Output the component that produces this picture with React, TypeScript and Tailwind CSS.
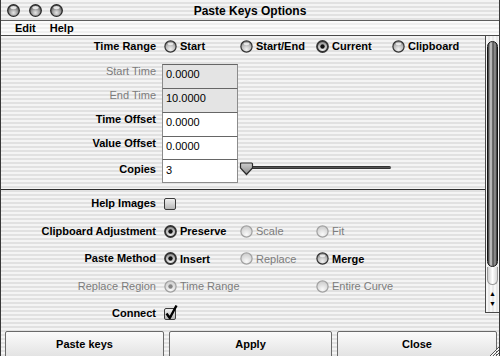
import React from "react";

function Light() {
  return (
    <svg width="13" height="13" viewBox="0 0 13 13">
      <defs>
        <radialGradient id="lg" cx="50%" cy="70%" r="60%">
          <stop offset="0%" stopColor="#e8e8e8" />
          <stop offset="60%" stopColor="#9a9a9a" />
          <stop offset="100%" stopColor="#5a5a5a" />
        </radialGradient>
      </defs>
      <circle cx="6.5" cy="6.5" r="5.8" fill="url(#lg)" stroke="#2a2a2a" strokeWidth="1.3" />
      <ellipse cx="6.5" cy="3.6" rx="3.2" ry="1.6" fill="#f4f4f4" opacity="0.85" />
    </svg>
  );
}

function Radio({ checked = false, disabled = false }: { checked?: boolean; disabled?: boolean }) {
  const rim = disabled ? "#a0a0a0" : "#333";
  return (
    <svg width="13" height="13" viewBox="0 0 13 13" className="shrink-0">
      <defs>
        <radialGradient id="rg" cx="50%" cy="75%" r="65%">
          <stop offset="0%" stopColor="#f2f2f2" />
          <stop offset="70%" stopColor="#b8b8b8" />
          <stop offset="100%" stopColor="#858585" />
        </radialGradient>
        <radialGradient id="rgd" cx="50%" cy="75%" r="65%">
          <stop offset="0%" stopColor="#fafafa" />
          <stop offset="100%" stopColor="#d0d0d0" />
        </radialGradient>
      </defs>
      <circle
        cx="6.5"
        cy="6.5"
        r={checked && !disabled ? 5.5 : 5.6}
        fill={disabled ? "url(#rgd)" : "url(#rg)"}
        stroke={rim}
        strokeWidth={checked && !disabled ? 1.8 : 1.2}
      />
      {!checked && !disabled && <ellipse cx="6.5" cy="3.8" rx="3" ry="1.4" fill="#ffffff" opacity="0.7" />}
      {checked && <circle cx="6.5" cy="6.5" r="2.2" fill={disabled ? "#858585" : "#111"} />}
    </svg>
  );
}

function Checkbox({ checked = false }: { checked?: boolean }) {
  return (
    <div className="relative w-[12px] h-[12px] shrink-0 rounded-[2px] border border-[#3c3c3c] bg-[linear-gradient(to_bottom,#f0f0f0,#b8b8b8)]">
      {checked && (
        <svg width="14" height="16" viewBox="0 0 14 16" className="absolute left-[-1px] top-[-5px]">
          <path d="M2.5 9.5 L5.8 14 L12.5 1.5" fill="none" stroke="#000" strokeWidth="2.4" strokeLinejoin="round" />
        </svg>
      )}
    </div>
  );
}

function Opt({ label, checked, disabled }: { label: string; checked?: boolean; disabled?: boolean }) {
  return (
    <div className="w-[76px] flex items-center gap-[3px] shrink-0">
      <Radio checked={checked} disabled={disabled} />
      <span className={disabled ? "text-[#7c7c7c] whitespace-nowrap" : "font-bold whitespace-nowrap"}>{label}</span>
    </div>
  );
}

function Label({ text, disabled }: { text: string; disabled?: boolean }) {
  return (
    <div className={"w-[155px] shrink-0 text-right leading-[13px] whitespace-nowrap " + (disabled ? "text-[#7c7c7c]" : "font-bold")}>
      {text}
    </div>
  );
}

function FieldRow({
  label,
  value,
  disabled,
  h,
}: {
  label: string;
  value: string;
  disabled?: boolean;
  h: string;
}) {
  return (
    <div className={"flex items-start " + h}>
      <div className="pt-[1px]">
        <Label text={label} disabled={disabled} />
      </div>
      <div
        className={
          "ml-[6px] w-[76px] h-full border-x border-t border-x-[#8c8c8c] border-t-[#666] pl-[3px] pt-[3px] leading-[13px] text-black " +
          (disabled ? "bg-[#e4e4e4]" : "bg-white")
        }
      >
        {value}
      </div>
    </div>
  );
}

export default function App() {
  return (
    <div className="relative w-[500px] h-[356px] overflow-hidden flex flex-col border-x border-[#3a3a3a] font-['Liberation_Sans',Arial,sans-serif] text-[11px] text-black bg-[repeating-linear-gradient(to_bottom,#f4f4f4_0px,#f4f4f4_2px,#e1e1e1_2px,#e1e1e1_4px)]">
      {/* Title bar */}
      <div className="h-[21px] shrink-0 grid grid-cols-[1fr_auto_1fr] items-center border-b border-[#5e5e5e]">
        <div className="flex gap-[8.5px] pl-[6px] pt-[1px] items-center">
          <Light />
          <Light />
          <Light />
        </div>
        <div className="font-bold text-[12px] leading-[14px] pt-[1px]">Paste Keys Options</div>
        <div />
      </div>
      {/* Menu bar */}
      <div className="h-[15px] shrink-0 flex items-center gap-[14px] pl-[14px] border-b border-[#4a4a4a] bg-[repeating-linear-gradient(to_bottom,#fbfbfb_0px,#fbfbfb_2px,#efefef_2px,#efefef_4px)] font-bold leading-[13px]">
        <span>Edit</span>
        <span>Help</span>
      </div>
      {/* Content */}
      <div className="h-[294px] shrink-0 flex">
        <div className="flex-1 flex flex-col">
          {/* Time Range */}
          <div className="h-[28px] flex items-start pt-[4px]">
            <Label text="Time Range" />
            <div className="ml-[8px] flex items-center h-[13px]">
              <Opt label="Start" />
              <Opt label="Start/End" />
              <Opt label="Current" checked />
              <Opt label="Clipboard" />
            </div>
          </div>
          <FieldRow label="Start Time" value="0.0000" disabled h="h-[24px]" />
          <FieldRow label="End Time" value="10.0000" disabled h="h-[24px]" />
          <FieldRow label="Time Offset" value="0.0000" h="h-[24px]" />
          <FieldRow label="Value Offset" value="0.0000" h="h-[23px]" />
          {/* Copies */}
          <div className="h-[24px] flex items-center">
            <div className="pb-[3px]">
              <Label text="Copies" />
            </div>
            <div className="ml-[6px] w-[76px] h-full border border-x-[#8c8c8c] border-t-[#666] border-b-[#8c8c8c] bg-white pl-[3px] pb-[2px] flex items-center leading-[13px]">
              3
            </div>
            <div className="relative ml-[1px] w-[155px] h-full">
              <div className="absolute left-[5px] top-[7px] w-[147px] h-[3px] rounded-full bg-[linear-gradient(to_bottom,#222,#555,#222)]" />
              <svg width="15" height="14" viewBox="0 0 15 14" className="absolute left-0 top-[3px]">
                <defs>
                  <linearGradient id="th" x1="0" y1="0" x2="0" y2="1">
                    <stop offset="0%" stopColor="#cfcfcf" />
                    <stop offset="100%" stopColor="#8a8a8a" />
                  </linearGradient>
                </defs>
                <path d="M1.5 2 Q1.5 1 2.5 1 L12.5 1 Q13.5 1 13.5 2 L13.5 6 L7.5 12.5 L1.5 6 Z" fill="url(#th)" stroke="#2c2c2c" strokeWidth="1.2" />
              </svg>
            </div>
          </div>
          <div className="h-[6px]" />
          <div className="h-0 border-t border-[#2e2e2e]" />
          {/* Section 2 */}
          <div className="h-[27.5px] flex items-center">
            <Label text="Help Images" />
            <div className="ml-[8px]">
              <Checkbox />
            </div>
          </div>
          <div className="h-[27.5px] flex items-center">
            <Label text="Clipboard Adjustment" />
            <div className="ml-[8px] flex items-center">
              <Opt label="Preserve" checked />
              <Opt label="Scale" disabled />
              <Opt label="Fit" disabled />
            </div>
          </div>
          <div className="h-[27.5px] flex items-center">
            <Label text="Paste Method" />
            <div className="ml-[8px] flex items-center">
              <Opt label="Insert" checked />
              <Opt label="Replace" disabled />
              <Opt label="Merge" />
            </div>
          </div>
          <div className="h-[27.5px] flex items-center">
            <Label text="Replace Region" disabled />
            <div className="ml-[8px] flex items-center">
              <div className="w-[152px] flex items-center gap-[3px]">
                <Radio checked disabled />
                <span className="text-[#7c7c7c]">Time Range</span>
              </div>
              <div className="flex items-center gap-[3px]">
                <Radio disabled />
                <span className="text-[#7c7c7c]">Entire Curve</span>
              </div>
            </div>
          </div>
          <div className="h-[27.5px] flex items-center">
            <Label text="Connect" />
            <div className="ml-[8px]">
              <Checkbox checked />
            </div>
          </div>
        </div>
        {/* Scrollbar */}
        <div className="w-[14px] shrink-0 flex flex-col">
          <div className="h-[277px] flex flex-col border-l border-b border-[#4a4a4a] bg-[repeating-linear-gradient(to_right,#f6f6f6_0px,#f6f6f6_2px,#e8e8e8_2px,#e8e8e8_4px)]">
            <div className="mt-[5px] mx-[1px] h-[226px] rounded-full border border-[#151515] bg-[linear-gradient(to_right,#2a2a2a_0%,#a8a8a8_22%,#d0d0d0_35%,#4a4a4a_55%,#9c9c9c_78%,#2a2a2a_100%)]" />
            <div className="mx-[1px] h-[18px] rounded-b-full border-x border-b border-[#9a9a9a] bg-[linear-gradient(to_right,#cfcfcf,#ffffff,#d8d8d8)]" />
            <div className="flex-1 flex flex-col items-center justify-center gap-[1px] text-[7px] leading-[9px] text-black">
              <span>▲</span>
              <span>▼</span>
            </div>
          </div>
        </div>
      </div>
      {/* Buttons */}
      <div className="flex-1 flex gap-[5px] pl-[4px] pt-[1px] items-start">
        <div className="w-[159px] h-[27px] shrink-0 flex items-center justify-center border border-[#6a6a6a] rounded-t-[2px] bg-[linear-gradient(to_bottom,#fbfbfb,#e2e2e2)] font-bold">
          Paste keys
        </div>
        <div className="w-[163px] h-[27px] shrink-0 flex items-center justify-center border border-[#6a6a6a] rounded-t-[2px] bg-[linear-gradient(to_bottom,#fbfbfb,#e2e2e2)] font-bold">
          Apply
        </div>
        <div className="w-[160px] h-[27px] shrink-0 flex items-center justify-center border border-[#6a6a6a] rounded-t-[2px] bg-[linear-gradient(to_bottom,#fbfbfb,#e2e2e2)] font-bold">
          Close
        </div>
      </div>
      <svg width="11" height="11" viewBox="0 0 11 11" className="absolute right-0 bottom-0">
        <path d="M2 11 L11 2 M5 11 L11 5 M8 11 L11 8" stroke="#555" strokeWidth="1" />
        <path d="M3 11 L11 3 M6 11 L11 6 M9 11 L11 9" stroke="#fff" strokeWidth="1" />
      </svg>
    </div>
  );
}
